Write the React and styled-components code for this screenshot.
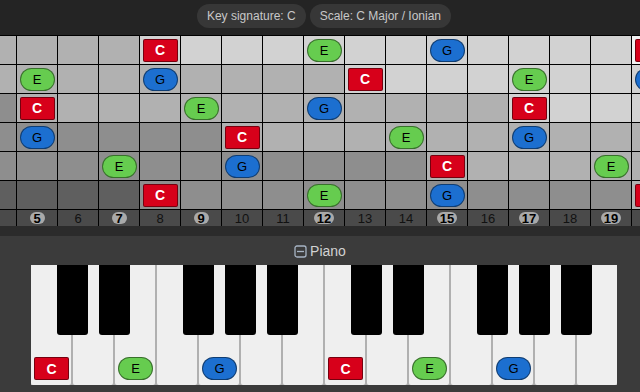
import React from 'react'
import styled, { createGlobalStyle } from 'styled-components'

const GlobalStyle = createGlobalStyle`
  html, body {
    margin: 0;
    padding: 0;
    background: #3b3b3b;
    font-family: "Liberation Sans", Arial, sans-serif;
    overflow: hidden;
  }
`

const OPEN_STRINGS = [64, 59, 55, 50, 45, 40]
const FRETS = Array.from({ length: 17 }, (_, i) => i + 4)
const INLAYS = [3, 5, 7, 9, 12, 15, 17, 19, 21]
// shade by octave number (C4 = 60)
const OCTAVE_SHADES = { 2: '#5f5f5f', 3: '#8e8e8e', 4: '#b1b1b1', 5: '#d2d2d2', 6: '#f2f2f2' }
const NOTES = { 0: { name: 'C', kind: 'root' }, 4: { name: 'E', kind: 'third' }, 7: { name: 'G', kind: 'fifth' } }

const WHITE_KEYS = ['C', 'D', 'E', 'F', 'G', 'A', 'B', 'C', 'D', 'E', 'F', 'G', 'A', 'B']
const BLACK_AFTER = [0, 1, 3, 4, 5, 7, 8, 10, 11, 12]
const KEY_PITCH = { C: 0, E: 4, G: 7 }

const Page = styled.div`
  display: flex;
  flex-direction: column;
  height: 392px;
  overflow: hidden;
`

const TopBar = styled.header`
  display: flex;
  justify-content: center;
  align-items: flex-start;
  gap: 4px;
  height: 35px;
  padding: 4px 0 0 8px;
  box-sizing: border-box;
  background: #242424;
`

const InfoPill = styled.div`
  height: 24px;
  line-height: 24px;
  padding: 0 10px;
  border-radius: 12px;
  background: #373737;
  color: #c8c8c8;
  font-size: 12px;
`

const Fretboard = styled.section`
  overflow: hidden;
  border-top: 1px solid #000;
  background: #000;
`

const FretGrid = styled.div`
  display: grid;
  grid-template-columns: repeat(17, 40px);
  grid-template-rows: repeat(6, 28px) 16px;
  gap: 1px;
  margin-left: -24px;
  width: max-content;
  background: #000;
`

const Cell = styled.div`
  display: flex;
  align-items: center;
  justify-content: center;
  background: ${p => p.$shade};
`

const LabelCell = styled.div`
  display: flex;
  align-items: center;
  justify-content: center;
  background: #4a4a4a;
  color: #111;
  font-size: 13px;
`

const Inlay = styled.span`
  display: inline-flex;
  align-items: center;
  justify-content: center;
  min-width: 15px;
  height: 12px;
  padding: 0 3px;
  box-sizing: border-box;
  border-radius: 7px;
  background: #a9a9a9;
  color: #000;
  font-weight: bold;
  font-size: 13px;
`

const MARKER_COLORS = { root: '#d7001a', third: '#66cc4f', fifth: '#1c6fd0' }

const Marker = styled.span`
  display: flex;
  align-items: center;
  justify-content: center;
  flex: none;
  width: 35px;
  height: 23px;
  box-sizing: border-box;
  border: 1px solid rgba(0, 0, 0, 0.45);
  border-radius: ${p => (p.$kind === 'root' ? '2px' : '12px')};
  background: ${p => MARKER_COLORS[p.$kind]};
  color: ${p => (p.$kind === 'root' ? '#fff' : '#000')};
  font-weight: ${p => (p.$kind === 'root' ? 'bold' : 'normal')};
  font-size: ${p => (p.$kind === 'root' ? '14px' : '13px')};
`

const Divider = styled.div`
  height: 10px;
  background: #2b2b2b;
`

const PianoPanel = styled.section`
  flex: 1;
  display: flex;
  flex-direction: column;
  align-items: center;
  padding-top: 6px;
  background: #3b3b3b;
`

const PanelTitle = styled.div`
  display: flex;
  align-items: center;
  gap: 3px;
  height: 18px;
  margin-bottom: 5px;
  color: #d2d2d2;
  font-size: 14px;
`

const Keyboard = styled.div`
  position: relative;
  display: flex;
  gap: 2px;
  background: #b0b0b0;
  margin-left: 8px;
`

const WhiteKey = styled.div`
  display: flex;
  align-items: flex-end;
  width: 40px;
  height: 120px;
  padding: 0 0 5px 3px;
  box-sizing: border-box;
  background: #efefef;
  border-radius: 0 0 2px 2px;
`

const BlackKey = styled.div`
  position: absolute;
  top: 0;
  left: ${p => p.$index * 42 + 41 - 15}px;
  width: 31px;
  height: 70px;
  background: #000;
  border-radius: 0 0 3px 3px;
`

const CollapseIcon = () => (
  <svg width="13" height="13" viewBox="0 0 13 13">
    <rect x="1" y="1" width="11" height="11" rx="2" fill="none" stroke="#a7b4c4" strokeWidth="1.3" />
    <line x1="3" y1="6.5" x2="10" y2="6.5" stroke="#a7b4c4" strokeWidth="1.3" />
  </svg>
)

const NoteMarker = ({ pitch }) => {
  const note = NOTES[pitch % 12]
  if (!note) return null
  return <Marker $kind={note.kind}>{note.name}</Marker>
}

export default function App() {
  return (
    <Page>
      <GlobalStyle />
      <TopBar>
        <InfoPill>Key signature: C</InfoPill>
        <InfoPill>Scale: C Major / Ionian</InfoPill>
      </TopBar>

      <Fretboard>
        <FretGrid>
          {OPEN_STRINGS.map((open, s) =>
            FRETS.map(fret => {
              const pitch = open + fret
              return (
                <Cell key={`${s}-${fret}`} $shade={OCTAVE_SHADES[Math.floor(pitch / 12) - 1]}>
                  <NoteMarker pitch={pitch} />
                </Cell>
              )
            })
          )}
          {FRETS.map(fret => (
            <LabelCell key={`label-${fret}`}>
              {INLAYS.includes(fret) ? <Inlay>{fret}</Inlay> : fret}
            </LabelCell>
          ))}
        </FretGrid>
      </Fretboard>

      <Divider />

      <PianoPanel>
        <PanelTitle>
          <CollapseIcon />
          Piano
        </PanelTitle>
        <Keyboard>
          {WHITE_KEYS.map((name, i) => (
            <WhiteKey key={i}>
              {name in KEY_PITCH && <NoteMarker pitch={KEY_PITCH[name]} />}
            </WhiteKey>
          ))}
          {BLACK_AFTER.map(i => <BlackKey key={i} $index={i} />)}
        </Keyboard>
      </PianoPanel>
    </Page>
  )
}
